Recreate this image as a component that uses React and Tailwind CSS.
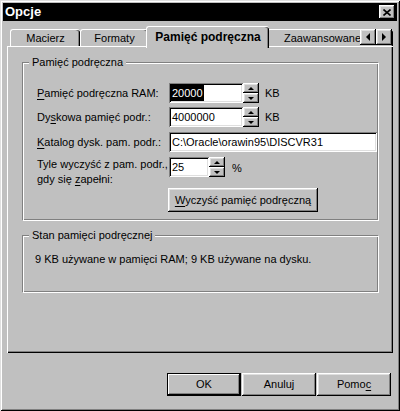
import React from "react";

const raised =
  "shadow-[inset_-1px_-1px_0_#000,inset_1px_1px_0_#fff,inset_-2px_-2px_0_#808080,inset_2px_2px_0_#dfdfdf]";
const sunken =
  "shadow-[inset_1px_1px_0_#808080,inset_-1px_-1px_0_#fff,inset_2px_2px_0_#000,inset_-2px_-2px_0_#dfdfdf]";

function U({ children }) {
  return <span className="underline underline-offset-[2px]">{children}</span>;
}

function Tri({ dir }) {
  const d = {
    up: "M0 3 L3 0 L6 3 Z",
    down: "M0 0 L6 0 L3 3 Z",
    left: "M4 0 L4 8 L0 4 Z",
    right: "M0 0 L0 8 L4 4 Z",
  }[dir];
  const vertical = dir === "up" || dir === "down";
  return (
    <svg width={vertical ? 6 : 4} height={vertical ? 3 : 8} viewBox={vertical ? "0 0 6 3" : "0 0 4 8"}>
      <path d={d} fill="#000" />
    </svg>
  );
}

function Spinner() {
  return (
    <div className="flex flex-col w-[16px] h-[20px]">
      <div className={`h-[10px] flex items-center justify-center bg-[#c0c0c0] ${raised}`}>
        <Tri dir="up" />
      </div>
      <div className={`h-[10px] flex items-center justify-center bg-[#c0c0c0] ${raised}`}>
        <Tri dir="down" />
      </div>
    </div>
  );
}

function Field({ width, children }) {
  return (
    <div className={`h-[20px] bg-white flex items-center pl-[3px] ${sunken} ${width}`}>
      {children}
    </div>
  );
}

function GroupBox({ title, className, children }) {
  return (
    <div
      className={`relative border border-t-[#808080] border-l-[#808080] border-b-white border-r-white shadow-[inset_1px_1px_0_#fff,inset_-1px_-1px_0_#808080] ${className}`}
    >
      <div className="absolute top-[-8px] left-[6px] px-[3px] bg-[#c0c0c0] leading-[15px]">{title}</div>
      {children}
    </div>
  );
}

function Tab({ label, active, className = "" }) {
  if (active) {
    return (
      <div
        className={`relative z-10 h-[22px] mb-[-2px] ml-[-2px] w-[123px] bg-[#c0c0c0] rounded-t-[3px] border-t border-l border-white shadow-[inset_-1px_0_0_#000,inset_-2px_0_0_#808080] flex items-center justify-center pb-[2px] font-bold text-[12px] ${className}`}
      >
        {label}
      </div>
    );
  }
  return (
    <div
      className={`h-[17px] rounded-t-[3px] border-t border-l border-white shadow-[inset_-1px_0_0_#000,inset_-2px_0_0_#808080] flex items-center ${className}`}
    >
      {label}
    </div>
  );
}

export default function App() {
  return (
    <div
      className={`w-[400px] h-[411px] bg-[#c0c0c0] p-[3px] flex flex-col text-[11px] text-black font-['Liberation_Sans',Arial,sans-serif] shadow-[inset_1px_1px_0_#dfdfdf,inset_-1px_-1px_0_#000,inset_2px_2px_0_#fff,inset_-2px_-2px_0_#808080]`}
    >
      {/* title bar */}
      <div className="h-[18px] bg-black flex items-center justify-between pl-[2px] pr-[2px]">
        <span className="text-white font-bold text-[13px]">Opcje</span>
        <div className={`w-[16px] h-[14px] bg-[#c0c0c0] flex items-center justify-center ${raised}`}>
          <svg width="8" height="7" viewBox="0 0 8 7">
            <path d="M0.5 0.5 L7.5 6.5 M7.5 0.5 L0.5 6.5" stroke="#000" strokeWidth="1.6" />
          </svg>
        </div>
      </div>

      <div className="px-[4px] mt-[5px] flex flex-col">
        {/* tab strip */}
        <div className="relative h-[20px] flex items-end pl-[3px]">
          <Tab label="Macierz" className="w-[70px] justify-center" />
          <Tab label="Formaty" className="w-[68px] justify-center" />
          <Tab label="Pamięć podręczna" active />
          <Tab label="Zaawansowane" className="ml-[-2px] flex-1 pl-[16px] overflow-hidden whitespace-nowrap" />
          <div className="absolute right-[1px] top-[3px] flex z-20">
            <div className={`w-[16px] h-[16px] bg-[#c0c0c0] flex items-center justify-center ${raised}`}>
              <Tri dir="left" />
            </div>
            <div className={`w-[16px] h-[16px] bg-[#c0c0c0] flex items-center justify-center ${raised}`}>
              <Tri dir="right" />
            </div>
          </div>
        </div>

        {/* tab page */}
        <div className="h-[307px] pl-[15px] pr-[14px] pt-[16px] shadow-[inset_1px_1px_0_#fff,inset_-1px_-1px_0_#000,inset_-2px_-2px_0_#808080]">
          <GroupBox title="Pamięć podręczna" className="h-[159px] pl-[14px] pt-[20px]">
            <div className="flex items-center h-[20px]">
              <span className="w-[132px]">
                <U>P</U>amięć podręczna RAM:
              </span>
              <Field width="w-[74px]">
                <span className="bg-black text-white leading-[16px] px-[1px] ml-[-1px]">20000</span>
              </Field>
              <Spinner />
              <span className="ml-[6px]">KB</span>
            </div>
            <div className="flex items-center h-[20px] mt-[4px]">
              <span className="w-[132px]">
                Dy<U>s</U>kowa pamięć podr.:
              </span>
              <Field width="w-[74px]">4000000</Field>
              <Spinner />
              <span className="ml-[6px]">KB</span>
            </div>
            <div className="flex items-center h-[20px] mt-[5px]">
              <span className="w-[132px]">
                <U>K</U>atalog dysk. pam. podr.:
              </span>
              <Field width="w-[208px]">{"C:\\Oracle\\orawin95\\DISCVR31"}</Field>
            </div>
            <div className="flex items-start mt-[5px]">
              <span className="w-[132px] leading-[15px] whitespace-nowrap">
                Tyle wyczyść z pam. podr.,
                <br />
                gdy się <U>z</U>apełni:
              </span>
              <Field width="w-[40px]">25</Field>
              <Spinner />
              <span className="ml-[7px] mt-[3px]">%</span>
            </div>
            <div className="flex mt-[1px] pl-[131px]">
              <button className={`w-[150px] h-[24px] bg-[#c0c0c0] ${raised}`}>
                <U>W</U>yczyść pamięć podręczną
              </button>
            </div>
          </GroupBox>

          <GroupBox title="Stan pamięci podręcznej" className="h-[58px] mt-[14px] pl-[12px] pt-[16px]">
            <p className="leading-[15px]">9 KB używane w pamięci RAM; 9 KB używane na dysku.</p>
          </GroupBox>
        </div>
      </div>

      {/* dialog buttons */}
      <div className="flex justify-end gap-[1px] pr-[6px] mt-[20px]">
        <button className={`w-[74px] h-[23px] bg-[#c0c0c0] border border-black shadow-[inset_-1px_-1px_0_#000,inset_1px_1px_0_#fff,inset_-2px_-2px_0_#808080]`}>
          OK
        </button>
        <button className={`w-[74px] h-[23px] bg-[#c0c0c0] ${raised}`}>Anuluj</button>
        <button className={`w-[74px] h-[23px] bg-[#c0c0c0] ${raised}`}>
          Pomo<U>c</U>
        </button>
      </div>
    </div>
  );
}
